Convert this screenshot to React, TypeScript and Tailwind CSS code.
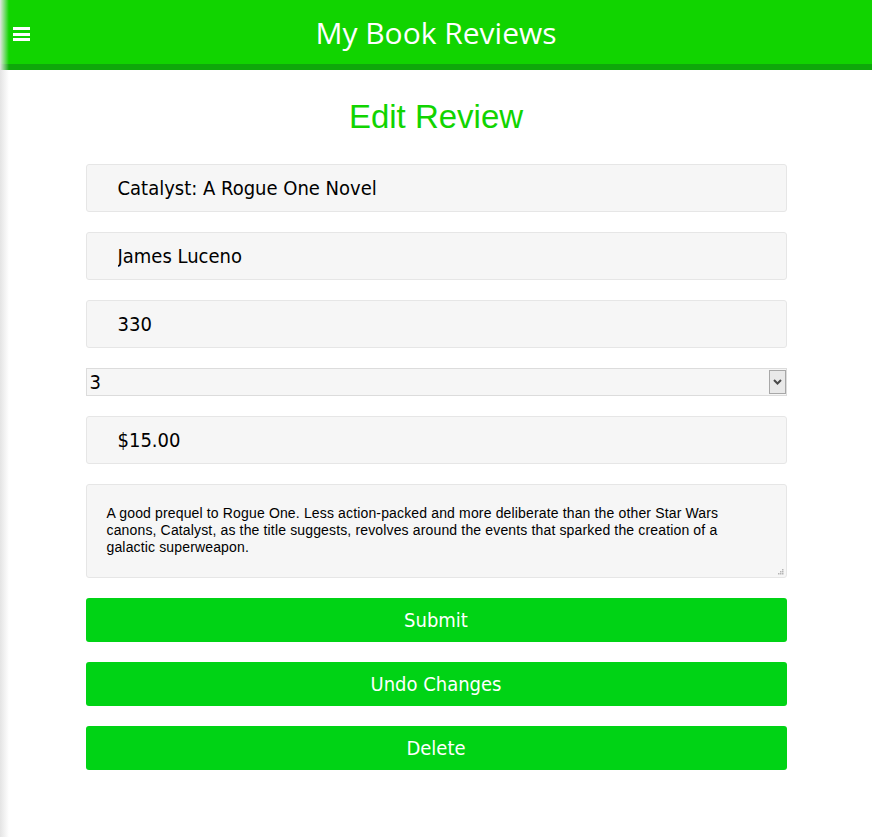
import { useState } from "react";

const FIELD =
  "w-full h-12 rounded-[3px] border border-[#e6e6e6] bg-[#f6f6f6] pl-[31px] pr-3 text-[20px] text-black outline-none font-['DejaVu_Sans_Condensed','DejaVu_Sans',sans-serif]";
const BUTTON =
  "w-full h-11 rounded-[3px] bg-[#00d315] text-white text-[20px] font-['DejaVu_Sans_Condensed','DejaVu_Sans',sans-serif]";

export default function App() {
  const [title, setTitle] = useState("Catalyst: A Rogue One Novel");
  const [author, setAuthor] = useState("James Luceno");
  const [pages, setPages] = useState("330");
  const [rating, setRating] = useState("3");
  const [price, setPrice] = useState("$15.00");
  const [review, setReview] = useState(
    "A good prequel to Rogue One. Less action-packed and more deliberate than the other Star Wars canons, Catalyst, as the title suggests, revolves around the events that sparked the creation of a galactic superweapon."
  );

  return (
    <div className="min-h-[837px] bg-white relative">
      {/* Header */}
      <header className="relative h-[70px] bg-[#11d400] border-b-[6px] border-[#0ea80a] flex items-center justify-center">
        <button className="absolute left-[13px] top-[27px] flex flex-col gap-[2.5px]">
          <span className="block w-[17px] h-[3px] bg-white" />
          <span className="block w-[17px] h-[3px] bg-white" />
          <span className="block w-[17px] h-[3px] bg-white" />
        </button>
        <h1 className="text-white text-[30px] font-['Open_Sans',sans-serif] leading-none mt-[1px]">
          My Book Reviews
        </h1>
      </header>

      {/* left edge shadow */}
      <div className="absolute left-0 top-0 bottom-0 w-[9px] bg-gradient-to-r from-[#e4e4e4] to-transparent pointer-events-none" />

      <main className="w-[701px] mx-auto pt-[26px]">
        <h2 className="text-center text-[#11d400] text-[33px] font-['Liberation_Sans',sans-serif] leading-[42px] mb-[26px]">
          Edit Review
        </h2>

        <form className="flex flex-col gap-5" onSubmit={(e) => e.preventDefault()}>
          <input className={FIELD} value={title} onChange={(e) => setTitle(e.target.value)} />
          <input className={FIELD} value={author} onChange={(e) => setAuthor(e.target.value)} />
          <input className={FIELD} value={pages} onChange={(e) => setPages(e.target.value)} />

          <div className="relative h-7">
            <select
              className="appearance-none w-full h-7 border border-[#dcdcdc] bg-[#f6f6f6] pl-[3px] text-[20px] leading-none text-black outline-none font-['DejaVu_Sans_Condensed','DejaVu_Sans',sans-serif]"
              value={rating}
              onChange={(e) => setRating(e.target.value)}
            >
              {["1", "2", "3", "4", "5"].map((n) => (
                <option key={n}>{n}</option>
              ))}
            </select>
            <span className="pointer-events-none absolute right-[1px] top-[2px] w-[17px] h-[24px] border border-[#a8a8a8] bg-[#e9e9e9] flex items-center justify-center">
              <svg width="9" height="6" viewBox="0 0 9 6">
                <path d="M1 1l3.5 3.5L8 1" fill="none" stroke="#4a4a4a" strokeWidth="2" />
              </svg>
            </span>
          </div>

          <input className={FIELD} value={price} onChange={(e) => setPrice(e.target.value)} />

          <div className="relative">
            <textarea
              className="block w-full h-[94px] rounded-[3px] border border-[#e6e6e6] bg-[#f6f6f6] pl-5 pr-12 pt-5 text-[14px] leading-[17px] tracking-[0.15px] text-black outline-none resize-none font-['Liberation_Sans',sans-serif]"
              value={review}
              onChange={(e) => setReview(e.target.value)}
            />
            {/* resize grip */}
            <svg className="absolute right-[3px] bottom-[3px] pointer-events-none" width="6" height="6" viewBox="0 0 6 6">
              <rect x="4" y="0" width="1.5" height="1.5" fill="#b5b5b5" />
              <rect x="2" y="2" width="1.5" height="1.5" fill="#b5b5b5" />
              <rect x="4" y="2" width="1.5" height="1.5" fill="#b5b5b5" />
              <rect x="0" y="4" width="1.5" height="1.5" fill="#b5b5b5" />
              <rect x="2" y="4" width="1.5" height="1.5" fill="#b5b5b5" />
              <rect x="4" y="4" width="1.5" height="1.5" fill="#b5b5b5" />
            </svg>
          </div>

          <button className={BUTTON}>Submit</button>
          <button className={BUTTON} type="button">Undo Changes</button>
          <button className={BUTTON} type="button">Delete</button>
        </form>
      </main>
    </div>
  );
}
